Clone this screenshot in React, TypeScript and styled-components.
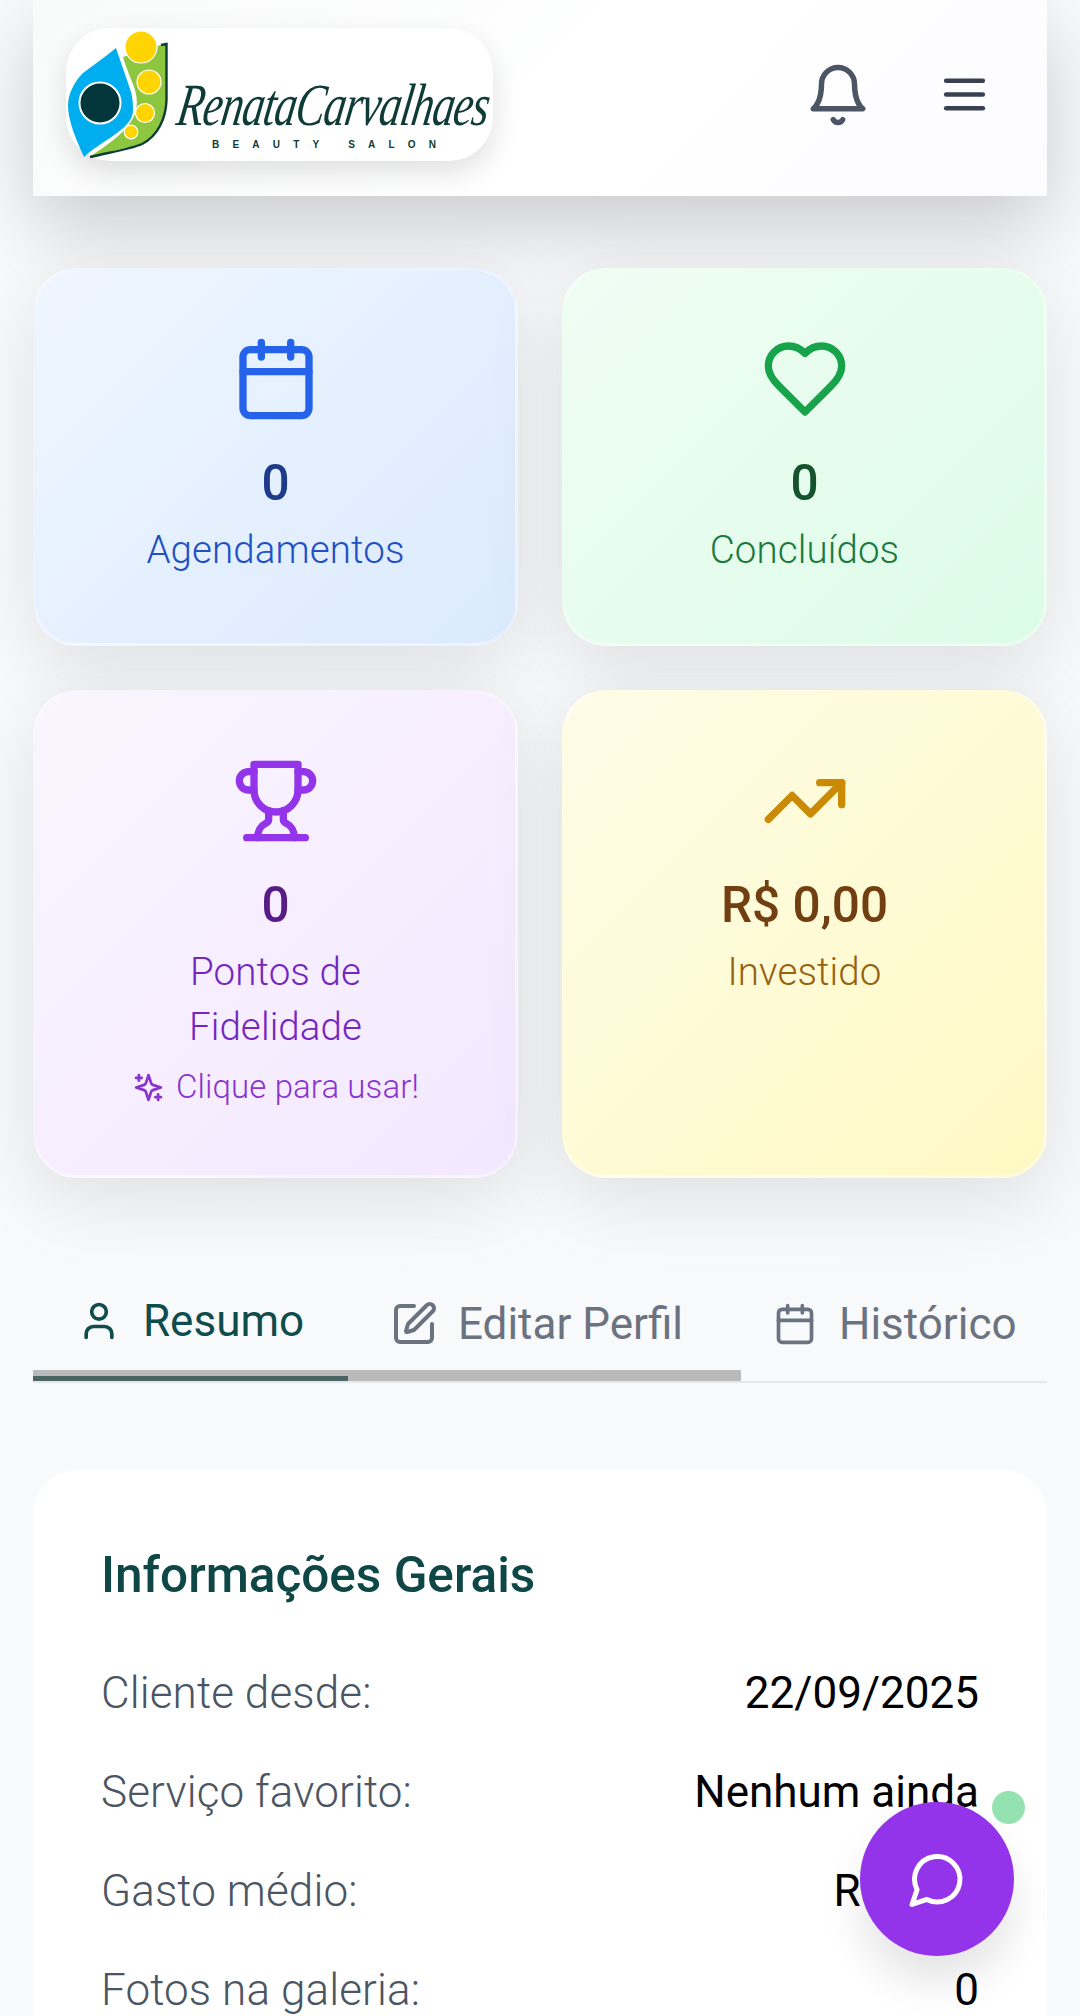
import * as React from "react";
import styled, { createGlobalStyle } from "styled-components";
import { Calendar, SquarePen, TrendingUp, User } from "lucide-react";

const GlobalStyle = createGlobalStyle`
  html, body {
    margin: 0;
    height: 2016px;
    overflow: hidden;
    background: #f9fafb;
    font-family: Roboto, "Noto Sans", sans-serif;
  }
  * {
    box-sizing: border-box;
  }
`;

const Page = styled.div`
  width: 1080px;
  height: 2016px;
  padding: 0 33px;
  overflow: hidden;
  background: linear-gradient(135deg, #f9fafb, #f8f9fc);
`;

const Header = styled.header`
  display: flex;
  align-items: center;
  justify-content: space-between;
  height: 196px;
  padding: 0 44px 0 33px;
  background: linear-gradient(135deg, #f9fafa, #ffffff 55%, #fcfcff);
  box-shadow: 0 30px 80px 0 rgba(0, 0, 0, 0.19);
`;

const LogoCard = styled.div`
  width: 427px;
  height: 133px;
  margin-top: -7px;
  border-radius: 44px;
  background: #ffffff;
  box-shadow: 0 11px 28px rgba(0, 0, 0, 0.12);
`;

const HeaderActions = styled.div`
  display: flex;
  align-items: center;
  gap: 44px;
  margin-top: -7px;
`;

const IconButton = styled.button<{ $color: string }>`
  display: flex;
  padding: 11px;
  border: 0;
  background: none;
  color: ${(p) => p.$color};
`;

const StatsGrid = styled.section`
  display: grid;
  grid-template-columns: 485px 485px;
  gap: 44px;
  margin-top: 72px;
`;

const StatCard = styled.div<{ $from: string; $to: string }>`
  display: flex;
  flex-direction: column;
  align-items: center;
  padding: 64px 30px 66px;
  border: 3px solid rgba(255, 255, 255, 0.35);
  border-radius: 44px;
  text-align: center;
  background: linear-gradient(135deg, ${(p) => p.$from}, ${(p) => p.$to});
  box-shadow: 0 20px 80px rgba(0, 0, 0, 0.11);
`;

const StatIcon = styled.div<{ $color: string }>`
  display: flex;
  margin-bottom: 22px;
  color: ${(p) => p.$color};
`;

const StatValue = styled.div<{ $color: string }>`
  font-size: 49.5px;
  font-weight: 500;
  line-height: 77px;
  color: ${(p) => p.$color};
`;

const StatLabel = styled.div<{ $color: string }>`
  font-size: 38.5px;
  font-weight: 300;
  line-height: 55px;
  letter-spacing: 0.1px;
  color: ${(p) => p.$color};
`;

const RedeemHint = styled.div`
  display: flex;
  align-items: center;
  justify-content: center;
  gap: 11px;
  margin-top: 11px;
  font-size: 33px;
  font-weight: 300;
  line-height: 44px;
  letter-spacing: 0.1px;
  color: #8a34cf;
`;

const Tabs = styled.nav`
  display: grid;
  grid-template-columns: 315px 393px 306px;
  height: 135px;
  margin-top: 70px;
  border-bottom: 2px solid #e5e7eb;
`;

// the grey strip runs under the first two tabs, the active one adds its own colour below it
const Tab = styled.div<{ $active?: boolean; $strip?: boolean }>`
  height: 133px;
  border-bottom: ${(p) => (p.$active ? "5px solid #4a6664" : p.$strip ? "11px solid #bababa" : "0")};
  box-shadow: ${(p) => (p.$active ? "inset 0 -6px 0 #bababa" : "none")};
`;

const TabContent = styled.div<{ $active?: boolean; $pad: number; $gap: number }>`
  display: flex;
  align-items: center;
  gap: ${(p) => p.$gap}px;
  height: 66px;
  margin-top: ${(p) => (p.$active ? "40px" : "43px")};
  padding-left: ${(p) => p.$pad}px;
  font-size: 44px;
  font-weight: 400;
  color: ${(p) => (p.$active ? "#0f4c4c" : "#6b7280")};
`;

const InfoCard = styled.section`
  margin-top: 87px;
  padding: 67px 68px 200px;
  border-radius: 44px;
  background: #ffffff;
`;

const InfoTitle = styled.h2`
  margin: 0 0 29px;
  font-size: 49.5px;
  font-weight: 500;
  line-height: 77px;
  color: #0f4747;
`;

const InfoRow = styled.div`
  display: flex;
  justify-content: space-between;
  padding: 16.5px 0;
  font-size: 44px;
  line-height: 66px;
`;

const InfoLabel = styled.span`
  font-weight: 300;
  letter-spacing: 0.12px;
  color: #4b5563;
`;

const InfoValue = styled.span`
  font-weight: 400;
  color: #000000;
`;

const ChatFab = styled.button`
  position: fixed;
  right: 66px;
  bottom: 60px;
  display: flex;
  align-items: center;
  justify-content: center;
  width: 154px;
  height: 154px;
  padding: 0;
  border: 0;
  border-radius: 50%;
  color: #ffffff;
  background: #9333ea;
  box-shadow: 0 27px 40px rgba(0, 0, 0, 0.1);
`;

const OnlineDot = styled.span`
  position: absolute;
  top: -11px;
  right: -11px;
  width: 33px;
  height: 33px;
  border-radius: 50%;
  background: #93e2b0;
`;

type GlyphProps = { size: number; children: React.ReactNode };

function Glyph({ size, children }: GlyphProps) {
  return (
    <svg
      width={size}
      height={size}
      viewBox="0 0 24 24"
      fill="none"
      stroke="currentColor"
      strokeWidth={2}
      strokeLinecap="round"
      strokeLinejoin="round"
    >
      {children}
    </svg>
  );
}

function Logo() {
  return (
    <svg width="427" height="133" viewBox="0 0 427 133">
      <path
        d="M50 20 C40 28 28 37 17 45 C8 54 2 66 2 78 C2 92 10 112 18 129 C30 118 42 112 51 105 C62 97 67 90 67 82 C67 72 66 66 63 58 C59 46 54 32 50 20 Z"
        fill="#00aeef"
      />
      <path
        d="M23 129 C40 118 55 108 64 95 C72 85 72 72 69 62 C65 50 60 40 57 29 L101 15 L101 72 C100 88 95 100 85 110 C76 118 60 119 23 129 Z"
        fill="#8dc63f"
      />
      <path
        d="M24 129 C45 124 65 121 76 116 C92 108 100 90 100.5 72 L100.5 16 L95 17"
        fill="none"
        stroke="#0f3b36"
        strokeWidth="2.4"
      />
      <circle cx="34" cy="75" r="20.5" fill="#03363a" stroke="#ffffff" strokeWidth="2" />
      <circle cx="75" cy="19" r="16" fill="#ffd400" stroke="#ffffff" strokeWidth="1.2" />
      <circle cx="83" cy="54" r="12" fill="#ffd400" stroke="#ffffff" strokeWidth="1.2" />
      <circle cx="79" cy="85" r="9.5" fill="#ffd400" stroke="#ffffff" strokeWidth="1.2" />
      <circle cx="65" cy="104" r="6.8" fill="#ffd400" stroke="#ffffff" strokeWidth="1.2" />
      <g transform="translate(109 97) skewX(-9) scale(1 1.36)">
        <text
          fontFamily="'Liberation Serif', serif"
          fontStyle="italic"
          fontSize="44"
          fill="#0f3b36"
          textLength="312"
        >
          RenataCarvalhaes
        </text>
      </g>
      <text
        x="146"
        y="120"
        fontFamily="'Liberation Sans', sans-serif"
        fontWeight="700"
        fontSize="10"
        fill="#0f3b36"
        textLength="224"
      >
        BEAUTY SALON
      </text>
    </svg>
  );
}

export default function App() {
  return (
    <Page>
      <GlobalStyle />
      <Header>
        <LogoCard>
          <Logo />
        </LogoCard>
        <HeaderActions>
          <IconButton $color="#4b5563">
            <Glyph size={66}>
              <path d="M6 8a6 6 0 0 1 12 0c0 7 3 9 3 9H3s3-2 3-9" />
              <path d="M10.3 21a1.94 1.94 0 0 0 3.4 0" />
            </Glyph>
          </IconButton>
          <IconButton $color="#374151">
            <Glyph size={55}>
              <line x1="4" y1="6" x2="20" y2="6" />
              <line x1="4" y1="12" x2="20" y2="12" />
              <line x1="4" y1="18" x2="20" y2="18" />
            </Glyph>
          </IconButton>
        </HeaderActions>
      </Header>

      <StatsGrid>
        <StatCard $from="#eff6ff" $to="#dbeafe">
          <StatIcon $color="#2563eb">
            <Calendar size={88} />
          </StatIcon>
          <StatValue $color="#1e3a8a">0</StatValue>
          <StatLabel $color="#2150c4">Agendamentos</StatLabel>
        </StatCard>
        <StatCard $from="#f0fdf4" $to="#dcfce7">
          <StatIcon $color="#16a34a">
            <Glyph size={88}>
              <path d="M19 14c1.49-1.46 3-3.21 3-5.5A5.5 5.5 0 0 0 16.5 3c-1.76 0-3 .5-4.5 2-1.5-1.5-2.74-2-4.5-2A5.5 5.5 0 0 0 2 8.5c0 2.3 1.5 4.05 3 5.5l7 7Z" />
            </Glyph>
          </StatIcon>
          <StatValue $color="#14532d">0</StatValue>
          <StatLabel $color="#1b7a3e">Concluídos</StatLabel>
        </StatCard>
        <StatCard $from="#faf5ff" $to="#f3e8ff">
          <StatIcon $color="#9333ea">
            <Glyph size={88}>
              <path d="M6 9H4.5a2.5 2.5 0 0 1 0-5H6" />
              <path d="M18 9h1.5a2.5 2.5 0 0 0 0-5H18" />
              <path d="M4 22h16" />
              <path d="M10 14.66V17c0 .55-.47.98-.97 1.21C7.85 18.75 7 20.24 7 22" />
              <path d="M14 14.66V17c0 .55.47.98.97 1.21C16.15 18.75 17 20.24 17 22" />
              <path d="M18 2H6v7a6 6 0 0 0 12 0V2Z" />
            </Glyph>
          </StatIcon>
          <StatValue $color="#581c87">0</StatValue>
          <StatLabel $color="#7526bf">
            Pontos de
            <br />
            Fidelidade
          </StatLabel>
          <RedeemHint>
            <Glyph size={33}>
              <path d="m12 3-1.912 5.813a2 2 0 0 1-1.275 1.275L3 12l5.813 1.912a2 2 0 0 1 1.275 1.275L12 21l1.912-5.813a2 2 0 0 1 1.275-1.275L21 12l-5.813-1.912a2 2 0 0 1-1.275-1.275L12 3Z" />
              <path d="M5 3v4" />
              <path d="M19 17v4" />
              <path d="M3 5h4" />
              <path d="M17 19h4" />
            </Glyph>
            Clique para usar!
          </RedeemHint>
        </StatCard>
        <StatCard $from="#fefce8" $to="#fef9c3">
          <StatIcon $color="#ca8a04">
            <TrendingUp size={88} />
          </StatIcon>
          <StatValue $color="#713f12">R$ 0,00</StatValue>
          <StatLabel $color="#96620f">Investido</StatLabel>
        </StatCard>
      </StatsGrid>

      <Tabs>
        <Tab $active>
          <TabContent $active $pad={44} $gap={22}>
            <User size={44} />
            Resumo
          </TabContent>
        </Tab>
        <Tab $strip>
          <TabContent $pad={42} $gap={20}>
            <SquarePen size={48} />
            Editar Perfil
          </TabContent>
        </Tab>
        <Tab>
          <TabContent $pad={32} $gap={22}>
            <Calendar size={44} />
            Histórico
          </TabContent>
        </Tab>
      </Tabs>

      <InfoCard>
        <InfoTitle>Informações Gerais</InfoTitle>
        <InfoRow>
          <InfoLabel>Cliente desde:</InfoLabel>
          <InfoValue>22/09/2025</InfoValue>
        </InfoRow>
        <InfoRow>
          <InfoLabel>Serviço favorito:</InfoLabel>
          <InfoValue>Nenhum ainda</InfoValue>
        </InfoRow>
        <InfoRow>
          <InfoLabel>Gasto médio:</InfoLabel>
          <InfoValue>R$ 0,00</InfoValue>
        </InfoRow>
        <InfoRow>
          <InfoLabel>Fotos na galeria:</InfoLabel>
          <InfoValue>0</InfoValue>
        </InfoRow>
      </InfoCard>

      <ChatFab>
        <Glyph size={60.5}>
          <path d="M7.9 20A9 9 0 1 0 4 16.1L2 22Z" />
        </Glyph>
        <OnlineDot />
      </ChatFab>
    </Page>
  );
}
